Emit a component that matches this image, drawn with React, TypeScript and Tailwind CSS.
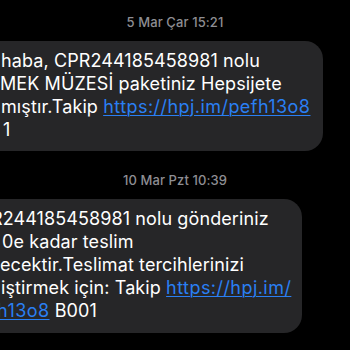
import React from "react";

const link = "text-[#2a7ff3] underline decoration-1 underline-offset-[2px] tracking-[0.45px]";

export default function App() {
  return (
    <div
      className="w-[350px] h-[350px] bg-black overflow-hidden text-white"
      style={{ fontFamily: "Inter, 'Noto Sans', sans-serif" }}
    >
      <div className="pt-[14px] text-center text-[13px] leading-[16px] text-[#8e8e93] font-medium tracking-[0.1px]">
        5 Mar Çar 15:21
      </div>
      <div className="mt-[11px] -ml-[30px] w-[353px] h-[110px] rounded-[18px] bg-[#262628] pl-[30px] pt-[8px] text-[18px] leading-[23px] whitespace-nowrap tracking-[0.1px]">
        <div className="ml-[1px]">haba, CPR244185458981 nolu</div>
        <div className="-ml-[5px]">İMEK MÜZESİ paketiniz Hepsijete</div>
        <div className="ml-[1px]">
          mıştır.Takip <span className={link}>https://hpj.im/pefh13o8</span>
        </div>
        <div className="ml-[3px]">1</div>
      </div>
      <div className="mt-[21px] text-center text-[13px] leading-[16px] text-[#8e8e93] font-medium tracking-[0.1px]">
        10 Mar Pzt 10:39
      </div>
      <div className="mt-[11px] -ml-[30px] w-[332px] h-[134px] rounded-[18px] bg-[#262628] pl-[30px] pt-[8px] text-[18px] leading-[23px] whitespace-nowrap tracking-[0.1px]">
        <div className="-ml-[9px]">R244185458981 nolu gönderiniz</div>
        <div className="ml-[2px]">0e kadar teslim</div>
        <div className="ml-[0px]">ecektir.Teslimat tercihlerinizi</div>
        <div className="ml-[1px]">
          iştirmek için: Takip <span className={link}>https://hpj.im/</span>
        </div>
        <div className="-ml-[3px]">
          <span className={link}>h13o8</span> B001
        </div>
      </div>
    </div>
  );
}
